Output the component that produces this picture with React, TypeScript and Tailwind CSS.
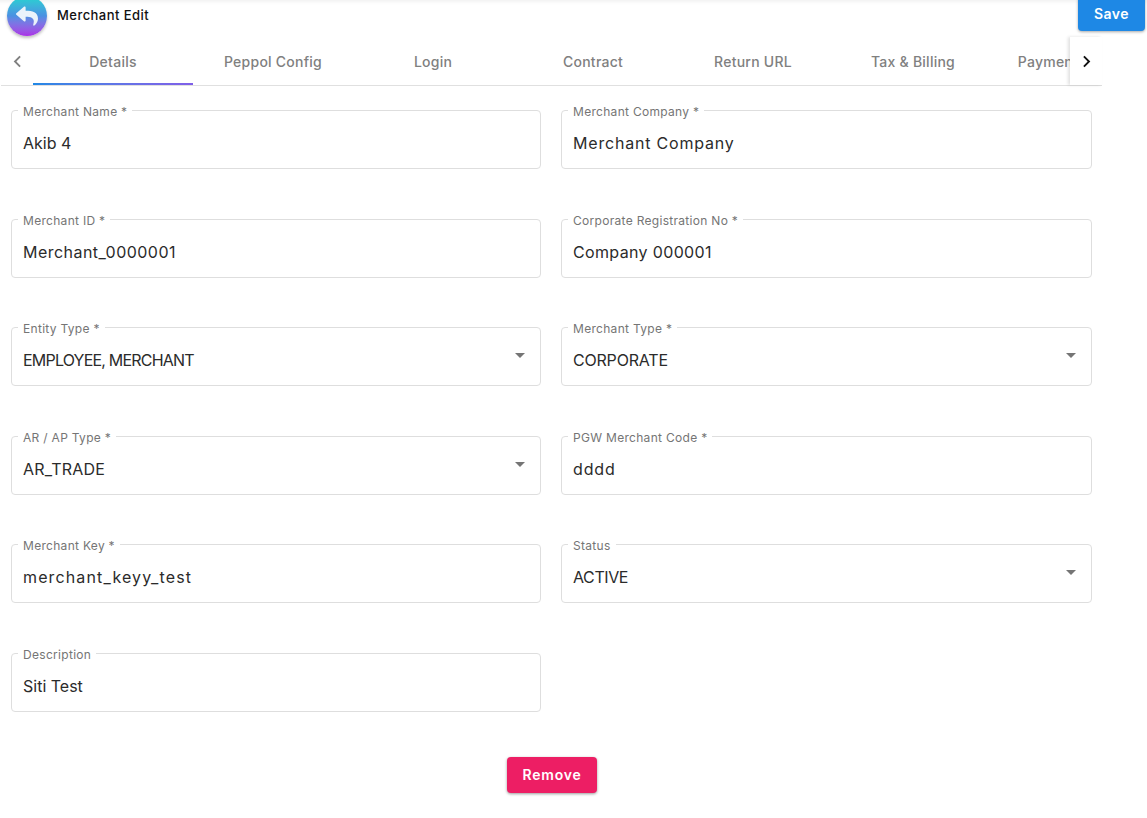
import { FC } from "react";
import { FaReply } from "react-icons/fa";
import { MdChevronLeft, MdChevronRight } from "react-icons/md";

interface IFieldProps {
    label: string;
    value: string;
    track: string;
    select?: boolean;
}

const tabs = ["Details", "Peppol Config", "Login", "Contract", "Return URL", "Tax & Billing", "Payment Config"];

// Inter runs narrower than the original font on lowercase, wider on capitals, so each value has its own tracking
const fields: IFieldProps[] = [
    { label: "Merchant Name *", value: "Akib 4", track: "tracking-[0px]" },
    { label: "Merchant Company *", value: "Merchant Company", track: "tracking-[0.8px]" },
    { label: "Merchant ID *", value: "Merchant_0000001", track: "tracking-[0.47px]" },
    { label: "Corporate Registration No *", value: "Company 000001", track: "tracking-[0.35px]" },
    { label: "Entity Type *", value: "EMPLOYEE, MERCHANT", track: "text-[15px] tracking-[-0.8px]", select: true },
    { label: "Merchant Type *", value: "CORPORATE", track: "text-[15px] tracking-[-0.2px]", select: true },
    { label: "AR / AP Type *", value: "AR_TRADE", track: "text-[15px] tracking-[0.2px]", select: true },
    { label: "PGW Merchant Code *", value: "dddd", track: "tracking-[0.85px]" },
    { label: "Merchant Key *", value: "merchant_keyy_test", track: "tracking-[1.13px]" },
    { label: "Status", value: "ACTIVE", track: "text-[15px] tracking-[-0.4px]", select: true },
    { label: "Description", value: "Siti Test", track: "tracking-[0px]" },
];

const Field: FC<IFieldProps> = ({ label, value, track, select }) => {
    return (
        <div className="relative h-[59px] rounded border border-[#dedede] px-[11px] flex items-center justify-between">
            <span className="absolute left-[6px] top-[-7px] bg-white px-[5px] text-[12px] leading-[16px] text-[#757575] tracking-[0.3px]">
                {label}
            </span>
            <span className={`mt-[7px] text-[16px] text-[#2b2b2b] ${track}`}>{value}</span>
            {select && <span className="mr-[4px] mb-[2px] h-0 w-0 border-x-[5px] border-t-[5px] border-x-transparent border-t-[#757575]" />}
        </div>
    );
};

const App: FC = () => {
    return (
        <div className="relative h-[818px] w-[1147px] overflow-hidden bg-white font-['Inter','Liberation_Sans',sans-serif]">
            <div className="flex h-[37px] items-start justify-between shadow-[inset_0_5px_4px_-4px_rgba(0,0,0,0.08)]">
                <div className="flex items-start">
                    <div className="ml-[7px] mt-[-4px] flex h-[40px] w-[40px] items-center justify-center rounded-full bg-gradient-to-b from-[#1fd6cf] via-[#4a90e2] to-[#a92fe6] shadow-[0_2px_3px_rgba(0,0,0,0.25)]">
                        <FaReply className="text-[#eaf2fb]" size={22} />
                    </div>
                    <span className="ml-[10px] mt-[7px] text-[13px] leading-[16px] font-medium text-[#111] tracking-[0.45px]">Merchant Edit</span>
                </div>
                <button className="mr-[2px] mt-[-4px] h-[35px] w-[67px] rounded bg-[#1e88e5] text-[14px] font-semibold text-white tracking-[0.5px] shadow-[0_1px_3px_rgba(0,0,0,0.35)]">
                    Save
                </button>
            </div>

            <div className="ml-px flex h-[49px] w-[1101px] border-b border-[#e0e0e0]">
                <div className="flex w-[32px] shrink-0 items-center justify-center text-[#808080]">
                    <MdChevronLeft size={23} />
                </div>
                <div className="flex flex-1 overflow-hidden">
                    {tabs.map((tab, i) => (
                        <div key={tab} className="relative flex h-[48px] w-[160px] shrink-0 items-center justify-center text-[14px] font-medium text-[#808080] tracking-[0.25px]">
                            {tab}
                            {i === 0 && <span className="absolute bottom-0 left-0 h-[2px] w-full bg-gradient-to-r from-[#1e88e5] to-[#7f5fe8]" />}
                        </div>
                    ))}
                </div>
                <div className="flex w-[32px] shrink-0 items-center justify-center bg-white text-[#111] shadow-[-2px_0_3px_rgba(0,0,0,0.12)]">
                    <MdChevronRight size={23} />
                </div>
            </div>

            <div className="ml-[11px] mt-[24px] grid w-[1081px] grid-cols-[530px_531px] gap-x-[20px] gap-y-[49.6px]">
                {fields.map((f) => (
                    <Field key={f.label} {...f} />
                ))}
            </div>

            <div className="ml-[507px] mt-[45px]">
                <button className="h-[36px] w-[90px] rounded bg-[#ed1e64] text-[14px] font-semibold text-white tracking-[0.8px] shadow-[0_1px_3px_rgba(0,0,0,0.4)]">
                    Remove
                </button>
            </div>
        </div>
    );
};

export default App;
